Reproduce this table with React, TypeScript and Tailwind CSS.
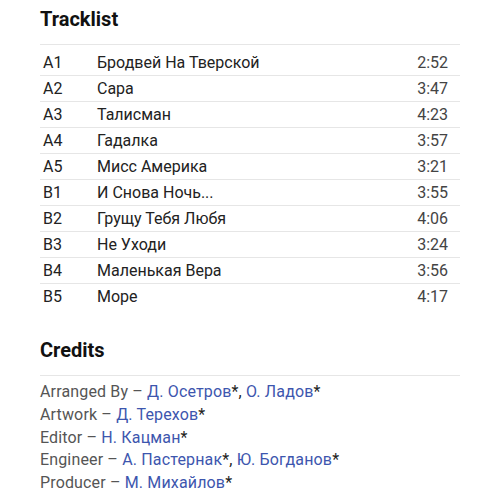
import React from "react";

const tracks = [
  ["A1", "Бродвей На Тверской", "2:52"],
  ["A2", "Сара", "3:47"],
  ["A3", "Талисман", "4:23"],
  ["A4", "Гадалка", "3:57"],
  ["A5", "Мисс Америка", "3:21"],
  ["B1", "И Снова Ночь...", "3:55"],
  ["B2", "Грущу Тебя Любя", "4:06"],
  ["B3", "Не Уходи", "3:24"],
  ["B4", "Маленькая Вера", "3:56"],
  ["B5", "Море", "4:17"],
];

const credits: [string, string[]][] = [
  ["Arranged By", ["Д. Осетров", "О. Ладов"]],
  ["Artwork", ["Д. Терехов"]],
  ["Editor", ["Н. Кацман"]],
  ["Engineer", ["А. Пастернак", "Ю. Богданов"]],
  ["Producer", ["М. Михайлов"]],
];

export default function App() {
  return (
    <div
      className="w-[500px] h-[500px] bg-white overflow-hidden pl-[40px]"
      style={{ fontFamily: "Roboto, 'Noto Sans', sans-serif" }}
    >
      <div className="w-[420px]">
        <h2 className="mt-[5px] text-[20px] leading-[28px] font-bold text-[#111]">Tracklist</h2>
        <div className="mt-[11px] border-t border-[#e6e6e6] pt-[5px]">
          {tracks.map(([pos, title, dur], i) => (
            <div
              key={pos}
              className={
                "flex items-center h-[26px] text-[16px] text-[#222] " +
                (i < tracks.length - 1 ? "border-b border-[#e6e6e6]" : "")
              }
            >
              <div className="w-[57px] pl-[3px]">{pos}</div>
              <div className="flex-1">{title}</div>
              <div className="pr-[12px] text-[#444]">{dur}</div>
            </div>
          ))}
        </div>
        <h2 className="mt-[26px] text-[20px] leading-[28px] font-bold text-[#111]">Credits</h2>
        <div className="mt-[11px] border-t border-[#e6e6e6] pt-[5px]">
          {credits.map(([role, names]) => (
            <div key={role} className="text-[16px] tracking-[0.15px] leading-[22.75px] text-[#555]">
              {role} –{" "}
              {names.map((n, j) => (
                <React.Fragment key={n}>
                  <span className="text-[#3d56ae]">{n}</span>
                  <span className="text-[#222]">*</span>
                  {j < names.length - 1 ? <span className="text-[#222]">, </span> : null}
                </React.Fragment>
              ))}
            </div>
          ))}
        </div>
      </div>
    </div>
  );
}
